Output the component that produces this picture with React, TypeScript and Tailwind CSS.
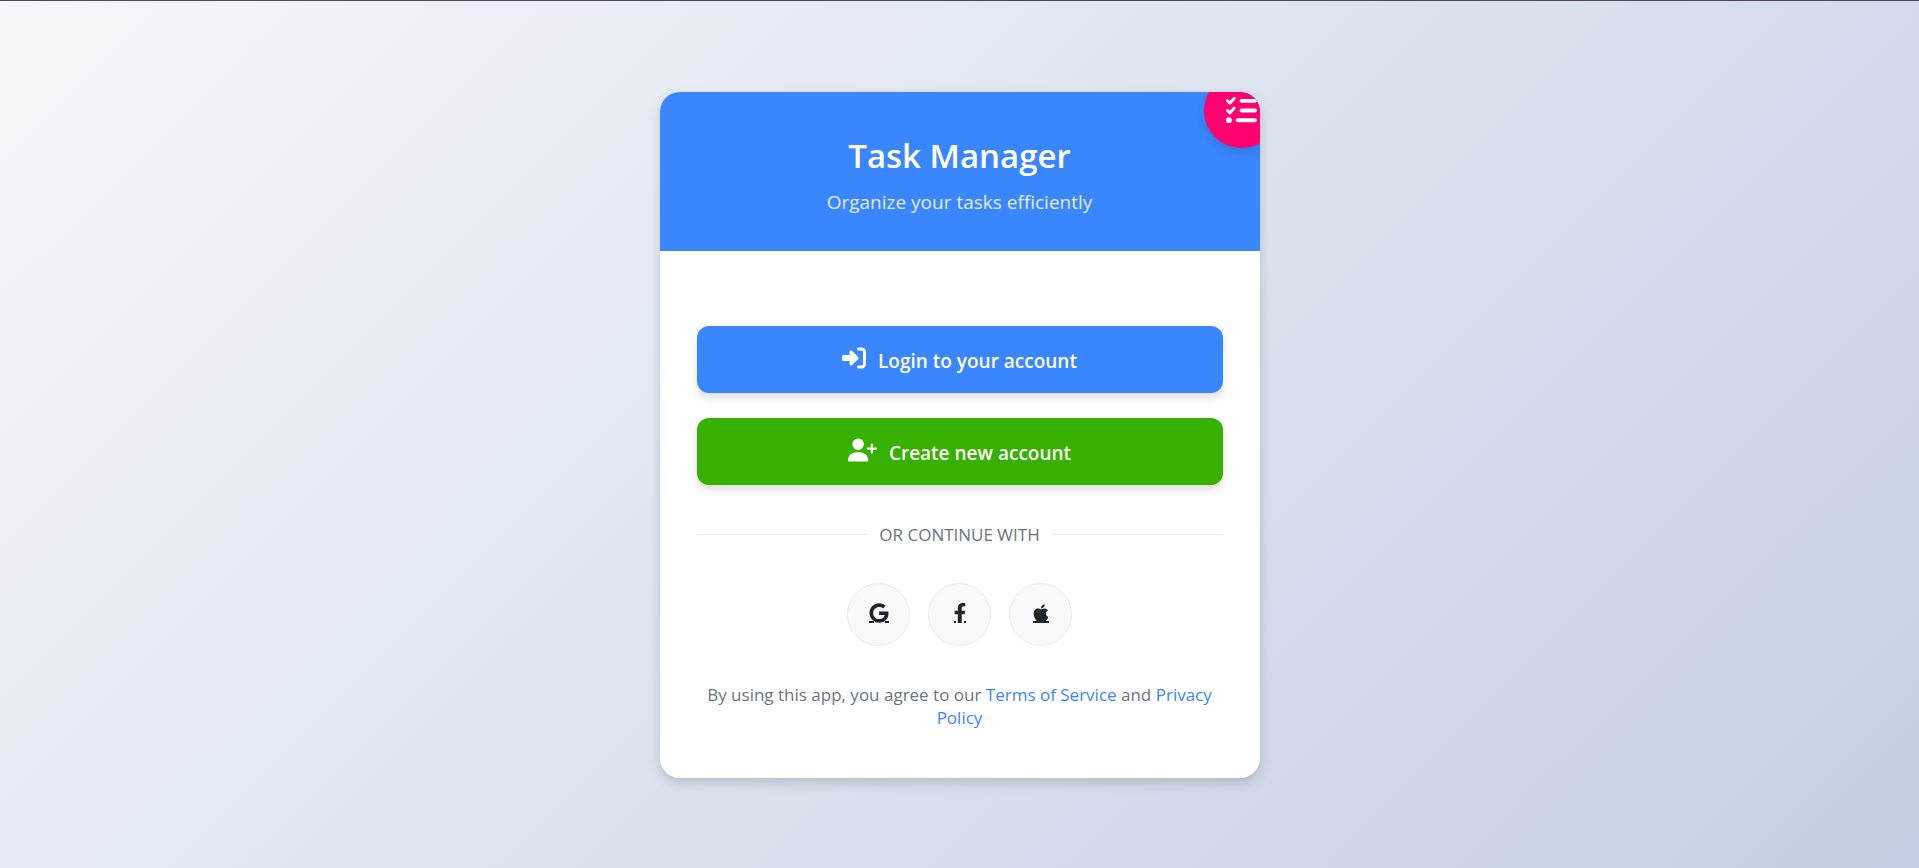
import { FaApple, FaFacebookF, FaGoogle } from 'react-icons/fa';
import { FaListCheck, FaRightToBracket, FaUserPlus } from 'react-icons/fa6';

const socials = [
  { name: 'Google', Icon: FaGoogle, underline: 'M0 19h5M16 19h4' },
  { name: 'Facebook', Icon: FaFacebookF, underline: 'M4 19h2M14 19h2' },
  { name: 'Apple', Icon: FaApple, underline: 'M2 19h16' },
];

export default function App() {
  return (
    <main className="flex min-h-screen items-center justify-center border-t border-[#4b4757] bg-[linear-gradient(135deg,#f5f7fa_0%,#c3cfe2_100%)] py-5 font-['Open_Sans',sans-serif] text-[#212529]">
      <section className="w-full max-w-[600px] overflow-hidden rounded-[20px] bg-white shadow-[0_5px_12px_rgba(0,0,0,0.15)]">
        <header className="relative bg-[#3a86ff] px-8 pt-11 pb-[34px] text-center text-white">
          <h1 className="text-[33px] leading-10 font-semibold">Task Manager</h1>
          <p className="mt-[11px] text-[19px] leading-[30px] opacity-85">Organize your tasks efficiently</p>
          <div className="absolute -top-[19px] -right-[19px] flex size-[75px] items-center justify-center rounded-full bg-[#ff006e] shadow-[0_5px_8px_rgba(0,0,0,0.12)]">
            <FaListCheck className="size-[31px]" />
          </div>
        </header>

        <div className="px-[37px] pt-[75px] pb-[49px]">
          <div className="flex flex-col gap-[25px]">
            <button className="flex h-[67px] items-center justify-center gap-3 rounded-xl bg-[#3a86ff] pt-1 text-[19px] font-semibold text-white shadow-[0_5px_8px_rgba(0,0,0,0.12)]">
              <FaRightToBracket className="mb-1.5 size-6" />
              Login to your account
            </button>
            <button className="flex h-[67px] items-center justify-center gap-3 rounded-xl bg-[#38b000] pt-1 text-[19px] font-semibold text-white shadow-[0_5px_8px_rgba(0,0,0,0.12)]">
              <FaUserPlus className="mb-1.5 h-6 w-[29px]" />
              Create new account
            </button>
          </div>

          <div className="mt-[37px] flex items-center gap-3 text-[17px] leading-[26px] text-[#6c757d] before:h-px before:flex-1 before:bg-[#e9ecef] after:h-px after:flex-1 after:bg-[#e9ecef]">
            OR CONTINUE WITH
          </div>

          <div className="mt-[35px] flex justify-center gap-[18px]">
            {socials.map(({ name, Icon, underline }) => (
              <a key={name} href="#" aria-label={name} className="grid size-[63px] place-items-center rounded-full border border-[#e9ecef] bg-[#f8f9fa] pb-[2px]">
                <Icon className="col-start-1 row-start-1 size-5" />
                <svg viewBox="0 0 20 20" className="col-start-1 row-start-1 size-5" stroke="currentColor" strokeWidth="2" aria-hidden="true">
                  <path d={underline} />
                </svg>
              </a>
            ))}
          </div>

          <p className="mt-[37px] text-center text-[17px] leading-[23px] text-[#6c757d]">
            By using this app, you agree to our{' '}
            <a href="#" className="text-[#3a86ff]">Terms of Service</a> and{' '}
            <a href="#" className="text-[#3a86ff]">Privacy Policy</a>
          </p>
        </div>
      </section>
    </main>
  );
}
